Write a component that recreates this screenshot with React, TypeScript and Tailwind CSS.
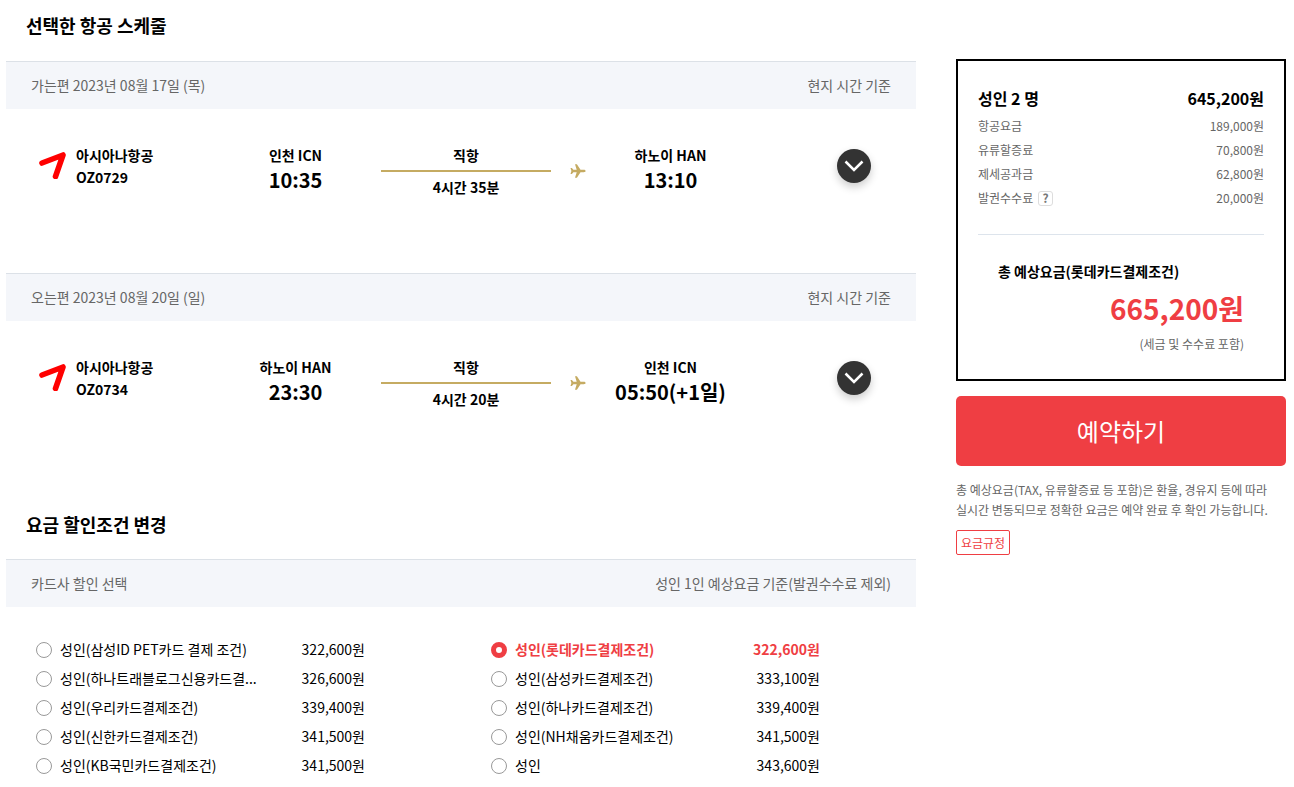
import { useState } from "react";

type Place = { airport: string; time: string };
type Flight = {
  label: string;
  code: string;
  from: Place;
  to: Place;
  duration: string;
};
type Fare = { name: string; price: string };

const flights: Flight[] = [
  {
    label: "가는편 2023년 08월 17일 (목)",
    code: "OZ0729",
    from: { airport: "인천 ICN", time: "10:35" },
    to: { airport: "하노이 HAN", time: "13:10" },
    duration: "4시간 35분",
  },
  {
    label: "오는편 2023년 08월 20일 (일)",
    code: "OZ0734",
    from: { airport: "하노이 HAN", time: "23:30" },
    to: { airport: "인천 ICN", time: "05:50(+1일)" },
    duration: "4시간 20분",
  },
];

const fares: Fare[] = [
  { name: "성인(삼성ID PET카드 결제 조건)", price: "322,600원" },
  { name: "성인(롯데카드결제조건)", price: "322,600원" },
  { name: "성인(하나트래블로그신용카드결...", price: "326,600원" },
  { name: "성인(삼성카드결제조건)", price: "333,100원" },
  { name: "성인(우리카드결제조건)", price: "339,400원" },
  { name: "성인(하나카드결제조건)", price: "339,400원" },
  { name: "성인(신한카드결제조건)", price: "341,500원" },
  { name: "성인(NH채움카드결제조건)", price: "341,500원" },
  { name: "성인(KB국민카드결제조건)", price: "341,500원" },
  { name: "성인", price: "343,600원" },
];

const charges: Fare[] = [
  { name: "항공요금", price: "189,000원" },
  { name: "유류할증료", price: "70,800원" },
  { name: "제세공과금", price: "62,800원" },
  { name: "발권수수료", price: "20,000원" },
];

function SectionBar({ left, right }: { left: string; right: string }) {
  return (
    <div className="flex h-12 items-center justify-between border-t border-[#dce1e7] bg-[#f4f6fa] px-[25px] pb-[2px] text-sm text-[#666]">
      <span>{left}</span>
      <span>{right}</span>
    </div>
  );
}

function AirlineMark() {
  return (
    <svg className="h-[30px] w-7 shrink-0" viewBox="0 0 28 30" fill="none" aria-hidden="true">
      <path
        d="M4 14 25 6 17.500 27.500"
        stroke="#ff0000"
        strokeWidth="5.600"
        strokeLinecap="round"
        strokeLinejoin="round"
      />
    </svg>
  );
}

function Plane() {
  return (
    <svg className="h-4 w-4" viewBox="0 0 16 16" fill="#c5ab62" aria-hidden="true">
      <path d="M15.600 8c0-.8-.9-1.200-1.900-1.200h-3.200L6.900 1.200H5l1.700 5.600H3.400L1.900 4.900H.5L1.400 8l-.9 3.100h1.400l1.500-1.900h3.300L5 14.800h1.900l3.600-5.600h3.200c1 0 1.900-.4 1.900-1.200z" />
    </svg>
  );
}

function Stop({ airport, time }: Place) {
  return (
    <div className="text-center whitespace-nowrap">
      <p className="text-sm leading-[22px] font-bold">{airport}</p>
      <p className="text-xl leading-7 font-bold">{time}</p>
    </div>
  );
}

function FlightLeg({ flight }: { flight: Flight }) {
  return (
    <article className="h-[212px]">
      <SectionBar left={flight.label} right="현지 시간 기준" />
      <div className="grid grid-cols-[204fr_171fr_170fr_54fr_131fr_180fr] pt-[35px]">
        <div className="flex gap-[10px] pl-8 text-sm leading-[22px] font-bold">
          <div className="pt-[5px]">
            <AirlineMark />
          </div>
          <div>
            <p>아시아나항공</p>
            <p>{flight.code}</p>
          </div>
        </div>
        <Stop {...flight.from} />
        <div className="text-center text-sm leading-[22px] font-bold">
          <p>직항</p>
          <div className="my-1 h-[2px] bg-[#c5ab62]" />
          <p>{flight.duration}</p>
        </div>
        <div className="flex justify-center pt-[19px]">
          <Plane />
        </div>
        <Stop {...flight.to} />
        <div className="flex justify-end pt-[5px] pr-[45px]">
          <button
            type="button"
            aria-label="상세 보기"
            className="flex h-[34px] w-[34px] items-center justify-center rounded-full bg-[#333] shadow-[0_4px_8px_rgba(0,0,0,0.2)]"
          >
            <svg className="h-5 w-5" viewBox="0 0 20 20" fill="none" aria-hidden="true">
              <path d="M1.500 5.500 10 14 18.500 5.500" stroke="#fff" strokeWidth="2.500" />
            </svg>
          </button>
        </div>
      </div>
    </article>
  );
}

export default function App() {
  const [selected, setSelected] = useState(1);

  return (
    <div className="flex items-start gap-10 bg-white pr-2 pl-[6px] font-['Noto_Sans_CJK_KR','Noto_Sans',sans-serif] text-black">
      <main className="min-w-0 flex-1">
        <section>
          <h2 className="px-5 pt-[11px] pb-[22px] text-lg leading-7 font-bold">선택한 항공 스케줄</h2>
          {flights.map((flight) => (
            <FlightLeg key={flight.code} flight={flight} />
          ))}
        </section>
        <section>
          <h2 className="px-5 pt-[25px] pb-[21px] text-lg leading-7 font-bold">요금 할인조건 변경</h2>
          <SectionBar left="카드사 할인 선택" right="성인 1인 예상요금 기준(발권수수료 제외)" />
          <div className="grid grid-cols-2 pt-7">
            {fares.map((fare, i) => (
              <label
                key={fare.name}
                className={
                  i === selected
                    ? "flex h-[29px] items-center pl-[30px] text-sm font-bold text-[#ef3e43]"
                    : "flex h-[29px] items-center pl-[30px] text-sm"
                }
              >
                <input
                  type="radio"
                  name="fare"
                  checked={i === selected}
                  onChange={() => setSelected(i)}
                  className="mr-2 h-4 w-4 shrink-0 appearance-none rounded-full border border-[#999] bg-white checked:border-[5px] checked:border-[#ef3e43]"
                />
                <span className="w-[205px] truncate pb-[2px]">{fare.name}</span>
                <span className="w-[100px] pb-[2px] text-right">{fare.price}</span>
              </label>
            ))}
          </div>
        </section>
      </main>

      <aside className="w-[330px] shrink-0 pt-[59px]">
        <div className="border-2 border-black px-5 pt-[23px] pb-[25px]">
          <div className="flex justify-between text-base leading-7 font-bold">
            <span>성인 2 명</span>
            <span>645,200원</span>
          </div>
          <dl className="pt-[2px] text-xs leading-6 text-[#666]">
            {charges.map((charge) => (
              <div key={charge.name} className="flex justify-between">
                <dt className="flex items-center">
                  {charge.name}
                  {charge.name === "발권수수료" && (
                    <button
                      type="button"
                      aria-label="발권수수료 안내"
                      className="ml-[5px] flex h-[15px] w-[15px] items-center justify-center rounded-[3px] border border-[#ddd] pb-px text-xs leading-3 font-bold text-[#777]"
                    >
                      ?
                    </button>
                  )}
                </dt>
                <dd>{charge.price}</dd>
              </div>
            ))}
          </dl>
          <div className="mt-6 border-t border-[#dde4ec] px-5 pt-6">
            <p className="text-sm leading-6 font-bold">총 예상요금(롯데카드결제조건)</p>
            <p className="pt-[3px] text-right text-[28px] leading-[44px] font-bold text-[#ef3e43]">665,200원</p>
            <p className="pt-1 text-right text-xs leading-5 text-[#666]">(세금 및 수수료 포함)</p>
          </div>
        </div>
        <button type="button" className="mt-[15px] h-[70px] w-full rounded-[5px] bg-[#ef3e43] text-2xl text-white">
          예약하기
        </button>
        <p className="mt-[14px] text-xs leading-5 text-[#666]">
          총 예상요금(TAX, 유류할증료 등 포함)은 환율, 경유지 등에 따라
          <br />
          실시간 변동되므로 정확한 요금은 예약 완료 후 확인 가능합니다.
        </p>
        <button
          type="button"
          className="mt-[10px] flex h-[25px] items-center rounded-[2px] border border-[#ef3e43] px-1 text-xs text-[#ef3e43]"
        >
          요금규정
        </button>
      </aside>
    </div>
  );
}
